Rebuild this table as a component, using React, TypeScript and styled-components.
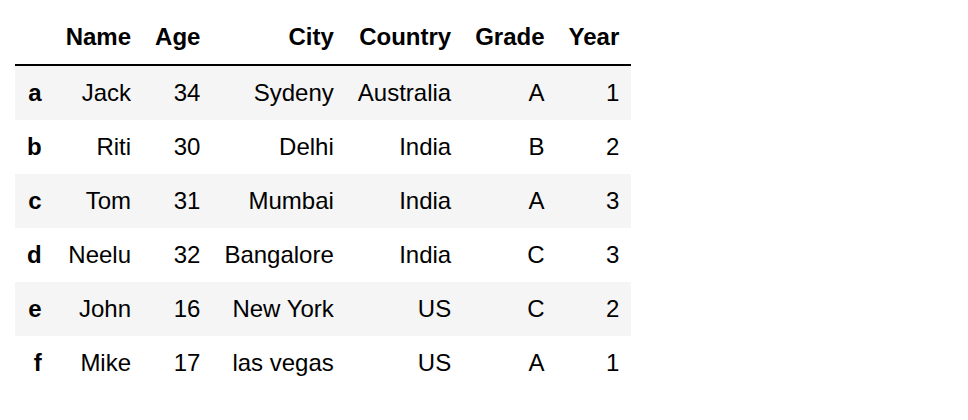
import styled, { createGlobalStyle } from "styled-components";

const GlobalStyle = createGlobalStyle`
  body {
    margin: 0;
    background: #ffffff;
    font-family: "Liberation Sans", Arial, sans-serif;
  }
`;

const Page = styled.div`
  padding: 10px 0 0 15px;
`;

const Table = styled.table`
  border-collapse: collapse;
  border-spacing: 0;
  border: none;
  font-size: 24px;
  color: #000;
`;

const HeadRow = styled.tr`
  border-bottom: 2px solid #000;
`;

const Th = styled.th`
  text-align: right;
  font-weight: bold;
  padding: 12px;
  line-height: 30px;
  white-space: nowrap;
`;

const Row = styled.tr<{ $striped: boolean }>`
  background: ${(p) => (p.$striped ? "#f5f5f5" : "transparent")};
`;

const IndexCell = styled.th`
  text-align: right;
  font-weight: bold;
  padding: 12px;
  line-height: 30px;
`;

const Td = styled.td`
  text-align: right;
  padding: 12px;
  line-height: 30px;
  white-space: nowrap;
`;

const columns = ["Name", "Age", "City", "Country", "Grade", "Year"];

const rows: { idx: string; cells: (string | number)[] }[] = [
  { idx: "a", cells: ["Jack", 34, "Sydeny", "Australia", "A", 1] },
  { idx: "b", cells: ["Riti", 30, "Delhi", "India", "B", 2] },
  { idx: "c", cells: ["Tom", 31, "Mumbai", "India", "A", 3] },
  { idx: "d", cells: ["Neelu", 32, "Bangalore", "India", "C", 3] },
  { idx: "e", cells: ["John", 16, "New York", "US", "C", 2] },
  { idx: "f", cells: ["Mike", 17, "las vegas", "US", "A", 1] },
];

export default function App() {
  return (
    <>
      <GlobalStyle />
      <Page>
        <Table>
          <thead>
            <HeadRow>
              <Th />
              {columns.map((c) => (
                <Th key={c}>{c}</Th>
              ))}
            </HeadRow>
          </thead>
          <tbody>
            {rows.map((r, i) => (
              <Row key={r.idx} $striped={i % 2 === 0}>
                <IndexCell>{r.idx}</IndexCell>
                {r.cells.map((v, j) => (
                  <Td key={j}>{v}</Td>
                ))}
              </Row>
            ))}
          </tbody>
        </Table>
      </Page>
    </>
  );
}
